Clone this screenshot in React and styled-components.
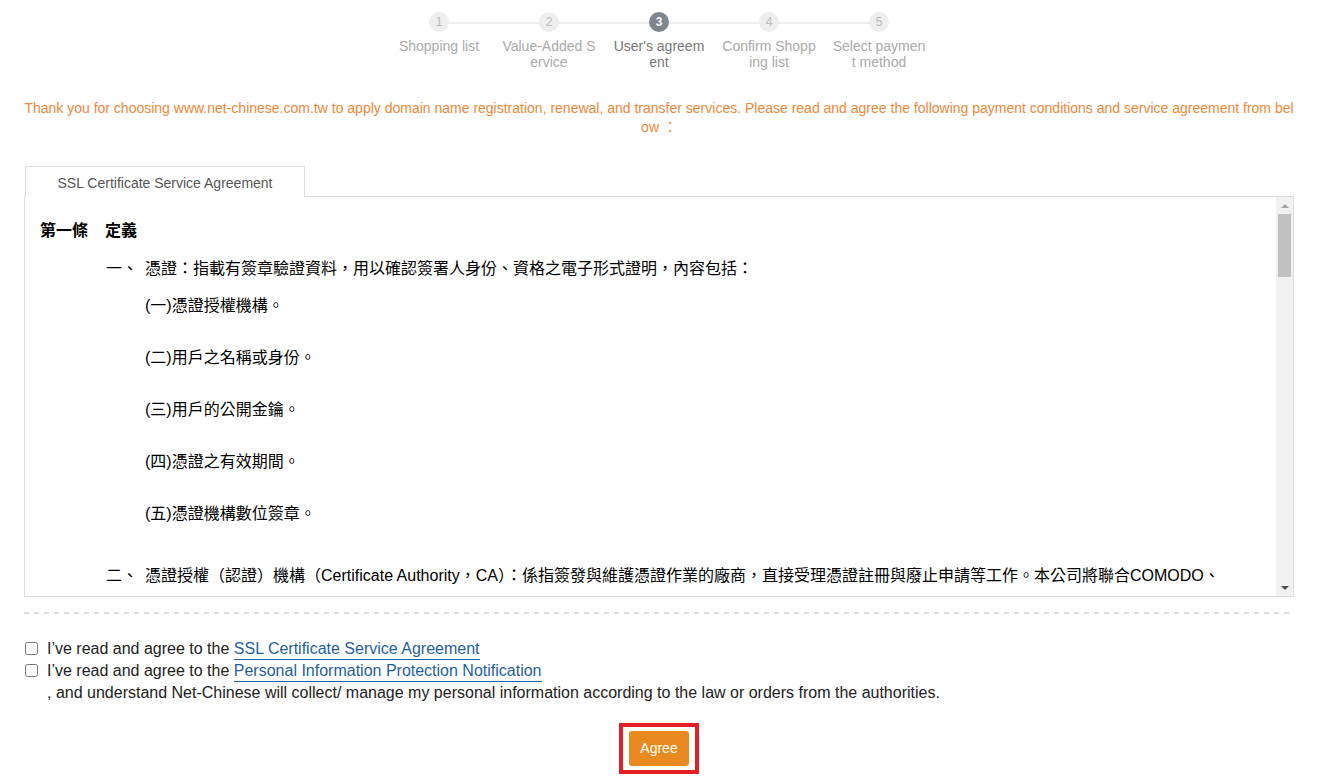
import React from "react";
import styled, { createGlobalStyle } from "styled-components";

const GlobalStyle = createGlobalStyle`
  html, body { margin: 0; padding: 0; background: #fff; }
  body {
    font-family: "Liberation Sans", Arial, "Noto Sans CJK TC", sans-serif;
    color: #222;
  }
`;

const Page = styled.div`
  padding: 12px 27px 0 24px;
`;

const Steps = styled.ol`
  position: relative;
  display: flex;
  justify-content: center;
  list-style: none;
  margin: 0 auto;
  padding: 0;
  width: 550px;
  &::before {
    content: "";
    position: absolute;
    left: 55px;
    right: 55px;
    top: 10px;
    height: 2px;
    background: #eee;
  }
`;

const Step = styled.li`
  position: relative;
  z-index: 1;
  width: 110px;
  display: flex;
  flex-direction: column;
  align-items: center;
`;

const Circle = styled.span`
  width: 20px;
  height: 20px;
  border-radius: 50%;
  background: ${(p) => (p.$active ? "#7f868e" : "#eeeeee")};
  color: ${(p) => (p.$active ? "#fff" : "#bbb")};
  font-size: 12px;
  font-weight: ${(p) => (p.$active ? "bold" : "normal")};
  line-height: 20px;
  text-align: center;
`;

const StepLabel = styled.span`
  margin-top: 6px;
  width: 96px;
  font-size: 14px;
  line-height: 16px;
  text-align: center;
  word-break: break-all;
  color: ${(p) => (p.$active ? "#777" : "#aaa")};
`;

const Notice = styled.p`
  margin: 29px 0 0;
  font-size: 14px;
  line-height: 19px;
  color: #f0883a;
  text-align: center;
  word-break: break-all;
`;

const TabBar = styled.div`
  display: flex;
  margin-top: 29px;
`;

const Tab = styled.div`
  position: relative;
  z-index: 1;
  box-sizing: border-box;
  margin: 0 0 -1px 1px;
  width: 280px;
  height: 31px;
  border: 1px solid #ddd;
  border-bottom: none;
  background: #fff;
  color: #555;
  font-size: 14px;
  line-height: 33px;
  text-align: center;
`;

const Box = styled.div`
  box-sizing: border-box;
  height: 401px;
  border: 1px solid #ddd;
  display: flex;
  background: #fff;
`;

const Viewport = styled.div`
  flex: 1;
  min-width: 0;
  overflow: hidden;
`;

const Scrollbar = styled.div`
  flex: none;
  width: 17px;
  display: flex;
  flex-direction: column;
  background: #f1f1f1;
`;

const ScrollButton = styled.div`
  flex: none;
  height: 17px;
  display: flex;
  align-items: center;
  justify-content: center;
  margin-top: ${(p) => (p.$end ? "auto" : "0")};
`;

const Thumb = styled.div`
  height: 63px;
  margin: 0 2px;
  background: #c1c1c1;
`;

const Article = styled.div`
  padding: 22px 15px 0 15px;
  color: #000;
  font-size: 16px;
`;

const Heading = styled.div`
  font-weight: bold;
  line-height: 24px;
  margin-top: ${(p) => p.$gap || 0}px;
`;

const HeadNo = styled.span`
  display: inline-block;
  width: 65px;
`;

const Item = styled.div`
  margin-top: ${(p) => p.$gap}px;
  padding-left: 105px;
  text-indent: -39px;
  line-height: ${(p) => p.$lh || 24}px;
`;

const ItemNo = styled.span`
  display: inline-block;
  width: 39px;
  text-indent: 0;
`;

const SubList = styled.div`
  margin-top: 13px;
  padding-left: 105px;
  display: flex;
  flex-direction: column;
  gap: 28px;
  line-height: 24px;
`;

const Dashed = styled.div`
  margin-top: 15px;
  height: 2px;
  background: repeating-linear-gradient(to right, #ddd 0 5px, transparent 5px 10px);
`;

const Agreements = styled.div`
  margin-top: 24px;
  font-size: 16px;
  line-height: 22px;
  color: #222;
`;

const Row = styled.label`
  display: flex;
  align-items: flex-start;
`;

const Check = styled.input`
  flex: none;
  width: 13px;
  height: 13px;
  margin: 4px 9px 0 1px;
`;

const RowText = styled.div`
  display: flex;
  flex-direction: column;
`;

const Link = styled.a`
  color: #1f5f9f;
  text-decoration: none;
  border-bottom: 1px solid #1f5f9f;
  padding-bottom: 2px;
`;

const Actions = styled.div`
  display: flex;
  justify-content: center;
  margin-top: 19px;
`;

const Highlight = styled.div`
  border: 4px solid #e41e26;
  padding: 4px 6px;
  display: flex;
`;

const AgreeButton = styled.button`
  width: 60px;
  height: 35px;
  border: none;
  border-radius: 3px;
  background: #e98a20;
  color: #fff;
  font-family: "Liberation Sans", Arial, sans-serif;
  font-size: 14px;
  padding: 0 0 2px;
  cursor: pointer;
`;

const steps = [
  "Shopping list",
  "Value-Added Service",
  "User's agreement",
  "Confirm Shopping list",
  "Select payment method",
];

const subs = [
  "(一)憑證授權機構。",
  "(二)用戶之名稱或身份。",
  "(三)用戶的公開金鑰。",
  "(四)憑證之有效期間。",
  "(五)憑證機構數位簽章。",
];

export default function App() {
  return (
    <>
      <GlobalStyle />
      <Page>
        <Steps>
          {steps.map((s, i) => (
            <Step key={s}>
              <Circle $active={i === 2}>{i + 1}</Circle>
              <StepLabel $active={i === 2}>{s}</StepLabel>
            </Step>
          ))}
        </Steps>

        <Notice>
          Thank you for choosing www.net-chinese.com.tw to apply domain name registration, renewal, and transfer services. Please read and agree the following payment conditions and service agreement from below ：
        </Notice>

        <TabBar>
          <Tab>SSL Certificate Service Agreement</Tab>
        </TabBar>
        <Box>
          <Viewport>
            <Article>
              <Heading>
                <HeadNo>第一條</HeadNo>定義
              </Heading>
              <Item $gap={14}>
                <ItemNo>一、</ItemNo>憑證：指載有簽章驗證資料，用以確認簽署人身份、資格之電子形式證明，內容包括：
              </Item>
              <SubList>
                {subs.map((s) => (
                  <div key={s}>{s}</div>
                ))}
              </SubList>
              <Item $gap={34} $lh={32}>
                <ItemNo>二、</ItemNo>憑證授權（認證）機構（Certificate Authority，CA）：係指簽發與維護憑證作業的廠商，直接受理憑證註冊與廢止申請等工作。本公司將聯合COMODO、GlobalSign、GeoTrust等國際知名之憑證授權機構，提供用戶申請SSL憑證服務。
              </Item>
            </Article>
          </Viewport>
          <Scrollbar>
            <ScrollButton>
              <svg width="8" height="4" viewBox="0 0 8 4">
                <path d="M0 4h8L4 0z" fill="#a3a3a3" />
              </svg>
            </ScrollButton>
            <Thumb />
            <ScrollButton $end>
              <svg width="8" height="4" viewBox="0 0 8 4">
                <path d="M0 0h8L4 4z" fill="#505050" />
              </svg>
            </ScrollButton>
          </Scrollbar>
        </Box>

        <Dashed />

        <Agreements>
          <Row>
            <Check type="checkbox" />
            <RowText>
              <span>
                I’ve read and agree to the <Link href="#ssl">SSL Certificate Service Agreement</Link>
              </span>
            </RowText>
          </Row>
          <Row>
            <Check type="checkbox" />
            <RowText>
              <span>
                I’ve read and agree to the <Link href="#privacy">Personal Information Protection Notification</Link>
              </span>
              <span>, and understand Net-Chinese will collect/ manage my personal information according to the law or orders from the authorities.</span>
            </RowText>
          </Row>
        </Agreements>

        <Actions>
          <Highlight>
            <AgreeButton type="button">Agree</AgreeButton>
          </Highlight>
        </Actions>
      </Page>
    </>
  );
}
